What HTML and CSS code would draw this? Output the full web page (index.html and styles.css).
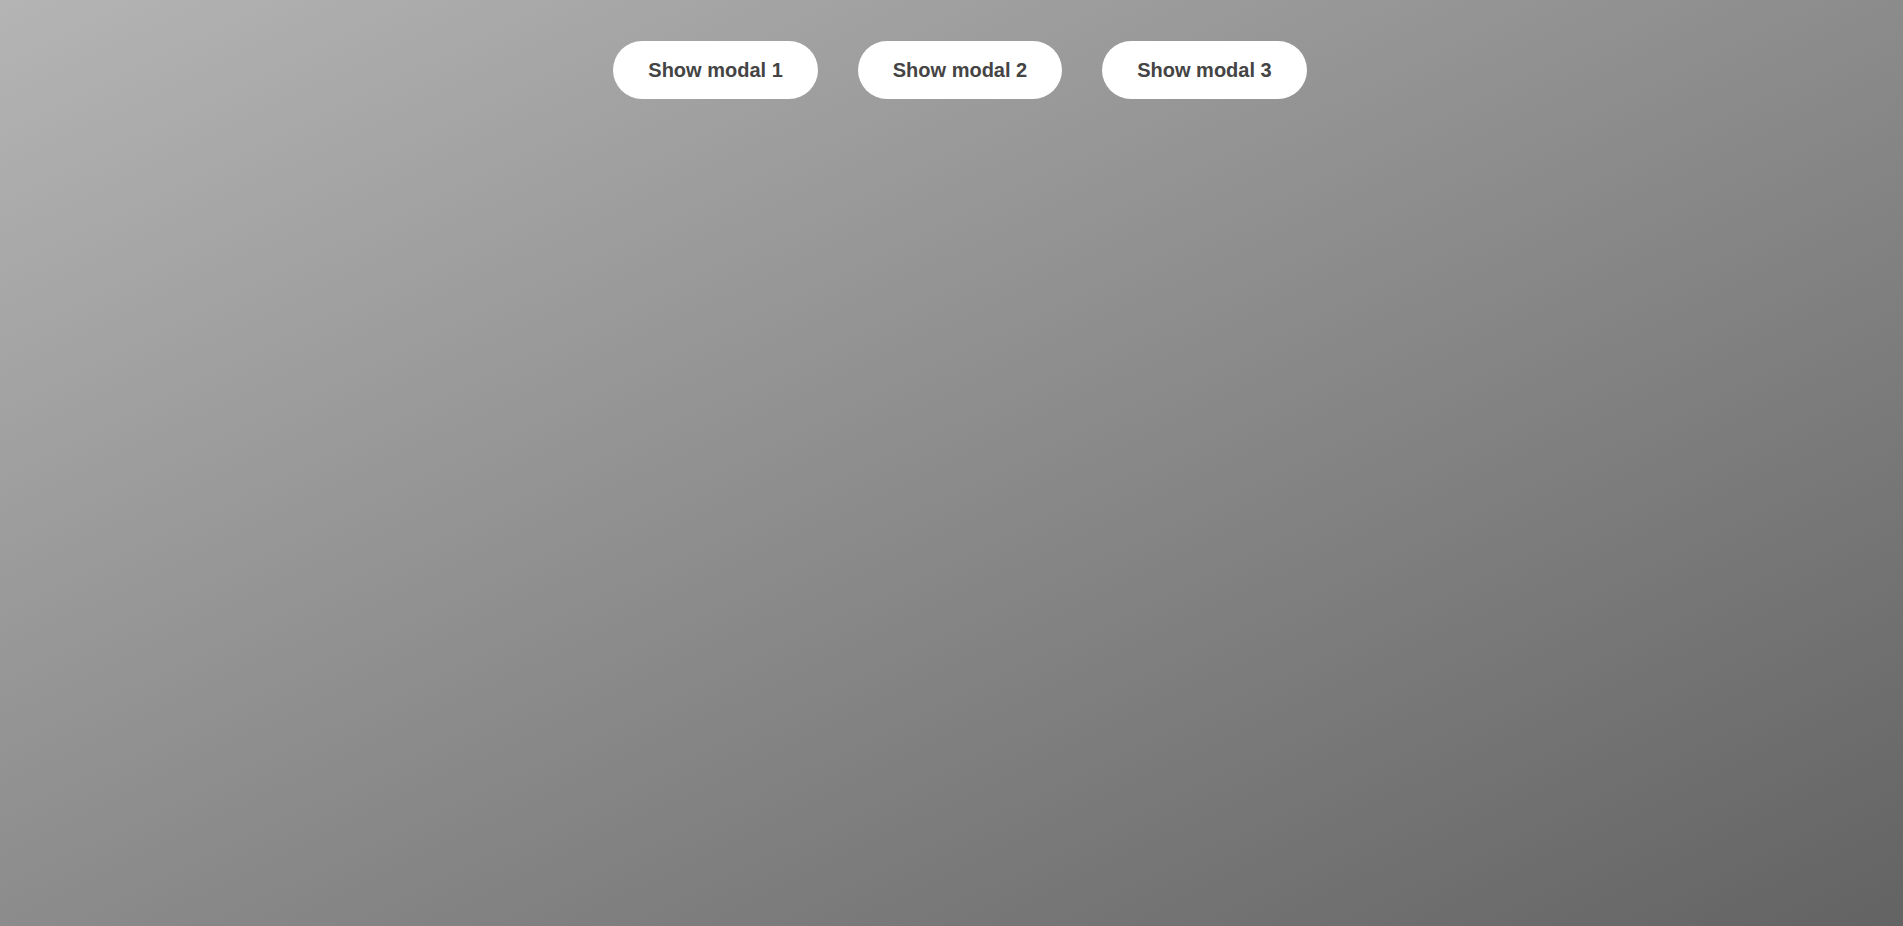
FILE: index.html
```html
<!DOCTYPE html>
<html lang="en">
<head>
<meta charset="utf-8">
<title>Modal window</title>
<link rel="stylesheet" href="styles.css">
</head>
<body>
<main class="actions">
<button type="button" class="show-modal">Show modal 1</button>
<button type="button" class="show-modal">Show modal 2</button>
<button type="button" class="show-modal">Show modal 3</button>
</main>
</body>
</html>
```
FILE: styles.css
```css
* {
  box-sizing: border-box;
  margin: 0;
}

html {
  height: 100%;
}

body {
  min-height: 100%;
  color: #333;
  font-family: "Liberation Sans", Arial, sans-serif;
  background: linear-gradient(to top left, #636363, #b4b4b4);
}

.actions {
  display: flex;
  justify-content: center;
  gap: 40px;
  padding: 41px 0 0 17px;
}

.show-modal {
  padding: 18px 35px;
  border: 0;
  border-radius: 100px;
  background: #fff;
  color: #444;
  font: bold 20px/22px "Liberation Sans", Arial, sans-serif;
  cursor: pointer;
}
```
